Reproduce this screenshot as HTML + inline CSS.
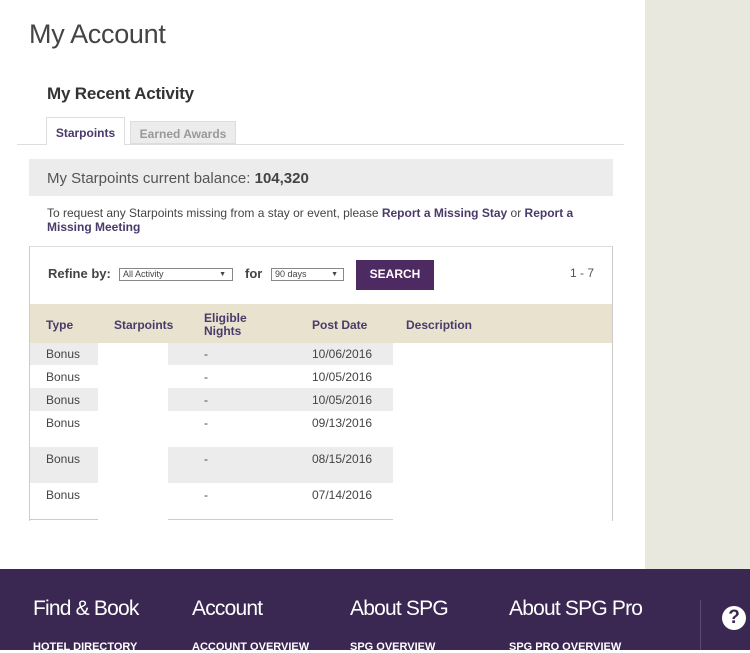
<!DOCTYPE html>
<html><head><style>
*{margin:0;padding:0;box-sizing:border-box}
body{width:750px;height:650px;position:relative;overflow:hidden;background:#fff;font-family:"Liberation Sans",sans-serif;color:#444}
.a{position:absolute}
.p{color:#4a3a6a;font-weight:bold}
.g{background:#ececec}
.c{font-size:12px;color:#444}
.fh{color:#fff;font-size:21px;top:597px;letter-spacing:-0.8px}
.fl{color:#fff;font-size:11px;font-weight:bold;top:641px}
</style></head><body>
<div class="a" style="left:645px;top:0;width:105px;height:569px;background:#e8e8df"></div>
<div class="a" style="left:29px;top:19px;font-size:27px;color:#444;letter-spacing:-0.3px">My Account</div>
<div class="a" style="left:47px;top:84px;font-size:17px;color:#333;font-weight:bold;letter-spacing:-0.2px">My Recent Activity</div>
<div class="a" style="left:17px;top:144px;width:607px;height:1px;background:#ddd"></div>
<div class="a" style="left:46px;top:117px;width:79px;height:28px;border:1px solid #ddd;border-bottom:none;background:#fff;font-size:12px;text-align:center;line-height:30px" ><span class="p">Starpoints</span></div>
<div class="a" style="left:130px;top:121px;width:106px;height:23px;border:1px solid #ddd;background:#ececec;font-size:12px;text-align:center;line-height:24px;color:#999;font-weight:bold">Earned Awards</div>
<div class="a g" style="left:29px;top:159px;width:584px;height:37px;font-size:15px;color:#555;line-height:40px;padding-left:18px">My Starpoints current balance: <b style="color:#444">104,320</b></div>
<div class="a" style="left:47px;top:206px;width:560px;font-size:12px;line-height:14px;color:#444">To request any Starpoints missing from a stay or event, please <span class="p">Report a Missing Stay</span> or <span class="p">Report a Missing Meeting</span></div>
<div class="a" style="left:29px;top:246px;width:584px;height:275px;border:1px solid #ccc;border-bottom:none;border-top-color:#ddd"></div>
<div class="a" style="left:48px;top:266px;font-size:13px;font-weight:bold;color:#444">Refine by:</div>
<div class="a" style="left:119px;top:268px;width:114px;height:13px;border:1px solid #888;font-size:9px;line-height:11px;padding-left:3px">All Activity<span style="position:absolute;right:6px;font-size:7px">▼</span></div>
<div class="a" style="left:245px;top:266px;font-size:13px;font-weight:bold;color:#444">for</div>
<div class="a" style="left:271px;top:268px;width:73px;height:13px;border:1px solid #888;font-size:9px;line-height:11px;padding-left:3px">90 days<span style="position:absolute;right:5px;font-size:7px">▼</span></div>
<div class="a" style="left:356px;top:260px;width:78px;height:30px;background:#4e2a63;color:#fff;font-size:12px;font-weight:bold;text-align:center;line-height:29px">SEARCH</div>
<div class="a" style="left:570px;top:266px;font-size:12px;color:#555">1 - 7</div>
<div class="a" style="left:30px;top:304px;width:582px;height:39px;background:#e8e2cf"></div>
<div class="a p" style="left:46px;top:318px;font-size:12px">Type</div>
<div class="a p" style="left:114px;top:318px;font-size:12px">Starpoints</div>
<div class="a p" style="left:204px;top:312px;font-size:12px;line-height:13px">Eligible<br>Nights</div>
<div class="a p" style="left:312px;top:318px;font-size:12px">Post Date</div>
<div class="a p" style="left:406px;top:318px;font-size:12px">Description</div>
<!-- gray stripes -->
<div class="a g" style="left:30px;top:343px;width:68px;height:22px"></div>
<div class="a g" style="left:168px;top:343px;width:225px;height:22px"></div>
<div class="a g" style="left:30px;top:388px;width:68px;height:23px"></div>
<div class="a g" style="left:168px;top:388px;width:225px;height:23px"></div>
<div class="a g" style="left:30px;top:447px;width:68px;height:36px"></div>
<div class="a g" style="left:168px;top:447px;width:225px;height:36px"></div>
<div class="a" style="left:30px;top:519px;width:68px;height:1px;background:#ccc"></div>
<div class="a" style="left:168px;top:519px;width:225px;height:1px;background:#ccc"></div>
<div class="a" style="left:98px;top:343px;width:70px;height:180px;background:#fff"></div>
<div class="a c" style="left:46px;top:347px">Bonus</div><div class="a c" style="left:204px;top:347px">-</div><div class="a c" style="left:312px;top:347px">10/06/2016</div>
<div class="a c" style="left:46px;top:370px">Bonus</div><div class="a c" style="left:204px;top:370px">-</div><div class="a c" style="left:312px;top:370px">10/05/2016</div>
<div class="a c" style="left:46px;top:393px">Bonus</div><div class="a c" style="left:204px;top:393px">-</div><div class="a c" style="left:312px;top:393px">10/05/2016</div>
<div class="a c" style="left:46px;top:416px">Bonus</div><div class="a c" style="left:204px;top:416px">-</div><div class="a c" style="left:312px;top:416px">09/13/2016</div>
<div class="a c" style="left:46px;top:452px">Bonus</div><div class="a c" style="left:204px;top:452px">-</div><div class="a c" style="left:312px;top:452px">08/15/2016</div>
<div class="a c" style="left:46px;top:488px">Bonus</div><div class="a c" style="left:204px;top:488px">-</div><div class="a c" style="left:312px;top:488px">07/14/2016</div>
<!-- footer -->
<div class="a" style="left:0;top:569px;width:750px;height:81px;background:#3a2752"></div>
<div class="a fh" style="left:33px">Find &amp; Book</div>
<div class="a fh" style="left:192px">Account</div>
<div class="a fh" style="left:350px">About SPG</div>
<div class="a fh" style="left:509px">About SPG Pro</div>
<div class="a fl" style="left:33px">HOTEL DIRECTORY</div>
<div class="a fl" style="left:192px">ACCOUNT OVERVIEW</div>
<div class="a fl" style="left:350px">SPG OVERVIEW</div>
<div class="a fl" style="left:509px">SPG PRO OVERVIEW</div>
<div class="a" style="left:700px;top:600px;width:1px;height:50px;background:#5a4a70"></div>
<div class="a" style="left:722px;top:606px;width:24px;height:24px;border-radius:50%;background:#fff;color:#3a2752;font-weight:bold;font-size:19px;text-align:center;line-height:24px">?</div>
</body></html>
